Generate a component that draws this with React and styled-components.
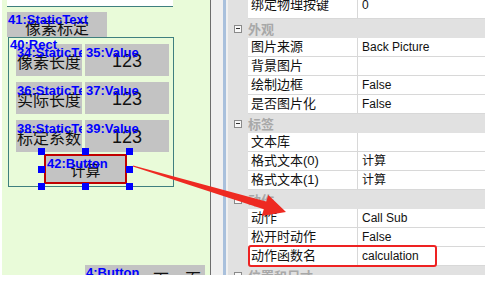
import React from "react";
import styled, { createGlobalStyle } from "styled-components";

const GlobalStyle = createGlobalStyle`
  *, *::before, *::after { box-sizing: border-box; }
  html, body { margin: 0; padding: 0; background: #fff; }
  body { font-family: "Liberation Sans", "Noto Sans CJK SC", sans-serif; }
`;

const rows = [
  { name: "绑定物理按键", value: "0", clip: true },
  { cat: "外观" },
  { name: "图片来源", value: "Back Picture" },
  { name: "背景图片", value: "" },
  { name: "绘制边框", value: "False" },
  { name: "是否图片化", value: "False" },
  { cat: "标签" },
  { name: "文本库", value: "" },
  { name: "格式文本(0)", value: "计算" },
  { name: "格式文本(1)", value: "计算" },
  { cat: "动作" },
  { name: "动作", value: "Call Sub" },
  { name: "松开时动作", value: "False" },
  { name: "动作函数名", value: "calculation", highlight: true },
  { cat: "位置和尺寸" },
];

const cells = [
  ["34:StaticText", "像素长度", "35:Value"],
  ["36:StaticText", "实际长度", "37:Value"],
  ["38:StaticText", "标定系数", "39:Value"],
];

// 3x3 grid of grab handles, centre slot left empty
const handles = [1, 1, 1, 1, 0, 1, 1, 1, 1];

const App = () => {
  return (
    <>
      <GlobalStyle />
      <Page>
        <Canvas>
          <TopStrip />
          <Widget $x={5} $y={12} $w={100} $h={25} $bottom>
            <Tag>41:StaticText</Tag>
            像素标定
          </Widget>
          <RectBox>
            <Tag $top={0}>40:Rect</Tag>
            <RectGrid>
              {cells.map(([l, t, r]) => (
                <React.Fragment key={l}>
                  <Cell>
                    <Tag $top={2}>{l}</Tag>
                    {t}
                  </Cell>
                  <Cell $num>
                    <Tag $top={2}>{r}</Tag>
                    123
                  </Cell>
                </React.Fragment>
              ))}
            </RectGrid>
          </RectBox>
          <Selection>
            <CalcButton>
              <Tag $top={1}>42:Button</Tag>
              计算
            </CalcButton>
            <HandleLayer>
              {handles.map((on, i) => (
                <Handle key={i} $on={on} />
              ))}
            </HandleLayer>
          </Selection>
          <Widget $x={83} $y={265} $w={120} $h={30} $pad>
            <Tag $top={1}>4:Button</Tag>
            下一页
          </Widget>
        </Canvas>
        <Splitter />
        <PropGrid>
          {rows.map((r, i) =>
            r.cat ? (
              <CatRow key={i}>
                <Gutter>
                  <Toggle />
                </Gutter>
                <CatText>{r.cat}</CatText>
              </CatRow>
            ) : (
              <Row key={i} $clip={r.clip} $highlight={r.highlight}>
                <Gutter />
                <NameCell>{r.name}</NameCell>
                <ValueCell>{r.value}</ValueCell>
              </Row>
            )
          )}
        </PropGrid>
        <Arrow width="493" height="288" viewBox="0 0 493 288">
          <polygon
            points="133.2,165.5 266.2,201.6 268.3,194.9 286,212 261.7,215.9 263.8,209.2 132.8,166.5"
            fill="#ee2a22"
          />
        </Arrow>
      </Page>
    </>
  );
};

const Page = styled.div`
  position: relative;
  display: flex;
  width: 485px;
  height: 275px;
  padding-left: 2px;
  overflow: hidden;
`;

const Canvas = styled.div`
  position: relative;
  flex-shrink: 0;
  width: 209px;
  height: 100%;
  background: #e9fbd9;
  border-right: 1px solid #6e6e6e;
  overflow: hidden;
`;

const TopStrip = styled.div`
  position: absolute;
  left: 5px;
  top: 0;
  width: 166px;
  height: 7px;
  background: #fff;
  border-bottom: 1px solid #3f7f7f;
`;

const Tag = styled.span`
  position: absolute;
  left: 1px;
  top: ${(p) => (p.$top ?? 1)}px;
  z-index: 2;
  color: #0000ff;
  font: bold 13px/13px "Liberation Sans", sans-serif;
  white-space: nowrap;
`;

const Widget = styled.div`
  position: absolute;
  left: ${(p) => p.$x}px;
  top: ${(p) => p.$y}px;
  width: ${(p) => p.$w}px;
  height: ${(p) => p.$h}px;
  background: #c3c3c3;
  display: flex;
  justify-content: ${(p) => (p.$pad ? "flex-start" : "center")};
  align-items: ${(p) => (p.$bottom ? "flex-end" : "flex-start")};
  padding: ${(p) => (p.$pad ? "5px 0 0 68px" : "0 0 1px 0")};
  color: #111;
  font: 16px/17px "Noto Sans CJK SC", sans-serif;
  overflow: hidden;
`;

const RectBox = styled.div`
  position: absolute;
  left: 6px;
  top: 37px;
  width: 166px;
  height: 150px;
  border: 1px solid #3f7f7f;
`;

const RectGrid = styled.div`
  display: grid;
  grid-template-columns: 66px 84px;
  grid-auto-rows: 32px;
  column-gap: 3px;
  row-gap: 6px;
  padding: 6px 0 0 7px;
`;

const Cell = styled.div`
  position: relative;
  background: #c3c3c3;
  overflow: hidden;
  display: flex;
  align-items: center;
  justify-content: center;
  padding-top: 2px;
  color: #111;
  font: ${(p) =>
    p.$num
      ? `18px/18px "Liberation Sans", sans-serif`
      : `16px/16px "Noto Sans CJK SC", sans-serif`};
`;

const Selection = styled.div`
  position: absolute;
  left: 39px;
  top: 151px;
  width: 89px;
  height: 36px;
  padding: 3px;
`;

const CalcButton = styled.div`
  position: relative;
  width: 100%;
  height: 100%;
  background: #c3c3c3;
  border: 2px solid #c00000;
  display: flex;
  align-items: center;
  justify-content: center;
  color: #111;
  font: 15px/15px "Noto Sans CJK SC", sans-serif;
`;

const HandleLayer = styled.div`
  position: absolute;
  inset: -3px;
  display: grid;
  grid-template-columns: repeat(3, 7px);
  grid-template-rows: repeat(3, 7px);
  justify-content: space-between;
  align-content: space-between;
  z-index: 3;
`;

const Handle = styled.span`
  background: ${(p) => (p.$on ? "#0000ff" : "transparent")};
`;

const Splitter = styled.div`
  flex-shrink: 0;
  width: 15px;
  background: #f0f0f0;
  border-right: 3px solid #a9c0dc;
`;

const PropGrid = styled.div`
  flex: 1;
  display: flex;
  flex-direction: column;
  background: #f0f0f0;
  padding-left: 2px;
  font-size: 13px;
`;

const Row = styled.div`
  position: relative;
  flex-shrink: 0;
  display: grid;
  grid-template-columns: 20px 110px 1fr;
  height: ${(p) => (p.$clip ? 28 : 19)}px;
  margin-top: ${(p) => (p.$clip ? -9 : 0)}px;

  ${(p) =>
    p.$highlight &&
    `
    &::after {
      content: "";
      position: absolute;
      left: 20px;
      top: -2px;
      width: 189px;
      height: 22px;
      border: 2px solid #ee2222;
      border-radius: 3px;
    }
  `}
`;

const Gutter = styled.div`
  background: #e1e1e1;
  display: flex;
  align-items: center;
  padding-left: 6px;
`;

const NameCell = styled.div`
  background: #fff;
  border-right: 1px solid #d8d8d8;
  border-bottom: 1px solid #d8d8d8;
  display: flex;
  align-items: center;
  padding-left: 3px;
  color: #111;
  font: 13px/14px "Liberation Sans", "Noto Sans CJK SC", sans-serif;
  white-space: nowrap;
`;

const ValueCell = styled(NameCell)`
  border-right: none;
  padding-left: 4px;
  font-size: 12px;
`;

const CatRow = styled.div`
  flex-shrink: 0;
  display: grid;
  grid-template-columns: 20px 1fr;
  height: 19px;
  background: #e1e1e1;
`;

const CatText = styled.div`
  display: flex;
  align-items: center;
  color: #a8a8a8;
  font: bold 13px/14px "Noto Sans CJK SC", sans-serif;
`;

const Toggle = styled.span`
  position: relative;
  width: 8px;
  height: 8px;
  border: 1px solid #8a8a8a;
  background: #f8f8f8;

  &::after {
    content: "";
    position: absolute;
    left: 1px;
    top: 2px;
    width: 4px;
    height: 1px;
    background: #333;
  }
`;

const Arrow = styled.svg`
  position: absolute;
  left: 0;
  top: 0;
  pointer-events: none;
  z-index: 5;
`;

export default App;
